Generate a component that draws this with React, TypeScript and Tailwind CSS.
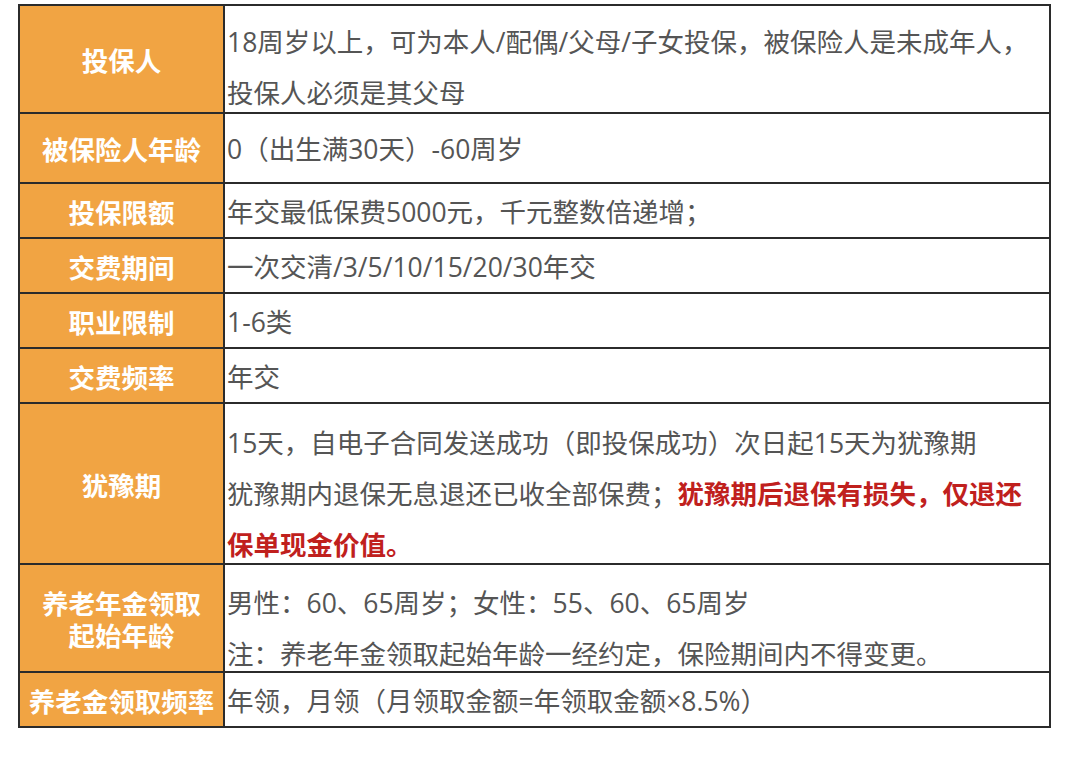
import React from 'react';

type Row = {
  label: React.ReactNode;
  height: string;
  multi?: string;
  content: React.ReactNode;
};

const red = 'font-bold text-[#c0201d]';

const rows: Row[] = [
  {
    label: '投保人',
    height: 'h-[106px]',
    multi: 'pt-[11px]',
    content: (
      <>
        <div>18周岁以上，可为本人/配偶/父母/子女投保，被保险人是未成年人，</div>
        <div>投保人必须是其父母</div>
      </>
    ),
  },
  { label: '被保险人年龄', height: 'h-[68px]', content: '0（出生满30天）-60周岁' },
  { label: '投保限额', height: 'h-[53px]', content: '年交最低保费5000元，千元整数倍递增；' },
  { label: '交费期间', height: 'h-[53px]', content: '一次交清/3/5/10/15/20/30年交' },
  { label: '职业限制', height: 'h-[53px]', content: '1-6类' },
  { label: '交费频率', height: 'h-[53px]', content: '年交' },
  {
    label: '犹豫期',
    height: 'h-[159px]',
    multi: 'pt-[14px]',
    content: (
      <>
        <div>15天，自电子合同发送成功（即投保成功）次日起15天为犹豫期</div>
        <div>
          犹豫期内退保无息退还已收全部保费；<span className={red}>犹豫期后退保有损失，仅退还</span>
        </div>
        <div className={red}>保单现金价值。</div>
      </>
    ),
  },
  {
    label: (
      <div className="leading-[32px]">
        <div>养老年金领取</div>
        <div>起始年龄</div>
      </div>
    ),
    height: 'h-[106px]',
    multi: 'pt-[13px]',
    content: (
      <>
        <div>男性：60、65周岁；女性：55、60、65周岁</div>
        <div>注：养老年金领取起始年龄一经约定，保险期间内不得变更。</div>
      </>
    ),
  },
  { label: '养老金领取频率', height: 'h-[53px]', content: '年领，月领（月领取金额=年领取金额×8.5%）' },
];

export default function App() {
  return (
    <div
      className="min-h-screen bg-white pt-[4px] pl-[18px]"
      style={{ fontFamily: '"Noto Sans CJK SC", "Noto Sans", sans-serif' }}
    >
      <div className="grid w-[1033px] grid-cols-[203px_1fr] gap-[2px] bg-[#2b2b2b] p-[2px]">
        {rows.map((r, i) => (
          <React.Fragment key={i}>
            <div
              className={`${r.height} flex items-center justify-center bg-[#f1a443] pt-[2px] text-center text-[26.5px] font-bold text-white`}
            >
              {r.label}
            </div>
            <div
              className={`${r.height} bg-white pl-[2px] font-['Open_Sans','Noto_Sans_CJK_SC',sans-serif] text-[26.5px] text-[#555555] ${
                r.multi ? `${r.multi} leading-[51px]` : 'flex items-center pt-[3px] leading-[51px]'
              }`}
            >
              {r.multi ? r.content : <div>{r.content}</div>}
            </div>
          </React.Fragment>
        ))}
      </div>
    </div>
  );
}
